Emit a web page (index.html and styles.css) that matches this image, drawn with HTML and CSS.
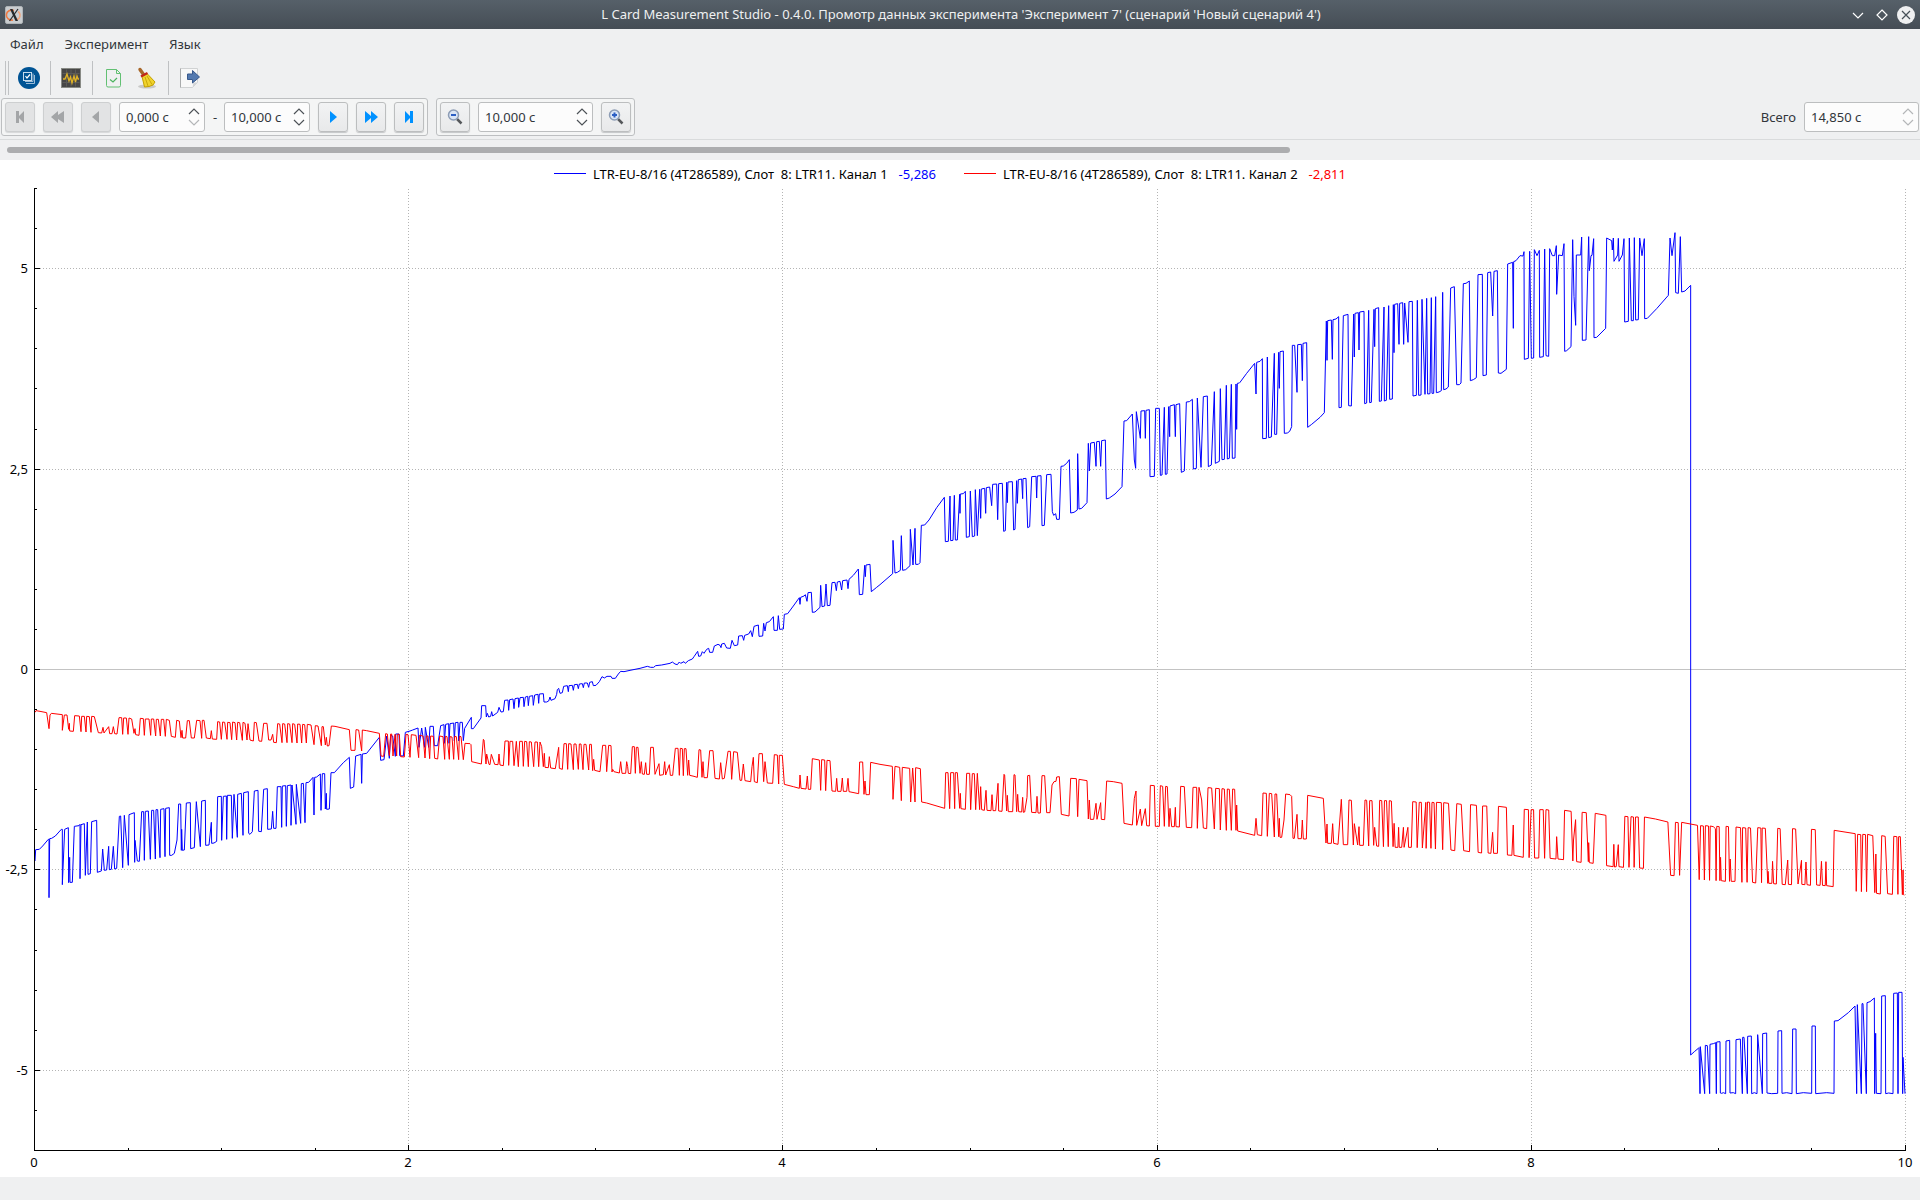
FILE: index.html
```html
<!DOCTYPE html>
<html lang="ru">
<head>
  <meta charset="UTF-8">
  <meta name="viewport" content="width=device-width, initial-scale=1.0">
  <title>L Card Measurement Studio</title>
  <link rel="stylesheet" href="styles.css">
</head>
<body>
  <header class="titlebar">
    <svg class="app-icon" width="18" height="18" viewBox="0 0 18 18">
      <rect x="0.5" y="0.5" width="17" height="17" rx="1.5" fill="#c9cdd0" stroke="#aeb3b7"/>
      <path d="M9 4.500A5.500 5 0 1 0 8 14" fill="none" stroke="#f07a43" stroke-width="1.600"/>
      <path d="M13 5.500a4.500 4.500 0 0 1-1 8" fill="none" stroke="#f0a47e" stroke-width="1.500"/>
      <path d="M5 3h2.500l5.500 12h-2.500z" fill="#25282b"/>
      <path d="M13 3L4.500 15" stroke="#25282b" stroke-width="1.200"/>
    </svg>
    <h1>L Card Measurement Studio - 0.4.0. Промотр данных эксперимента 'Эксперимент 7' (сценарий 'Новый сценарий 4')</h1>
    <div class="window-buttons">
      <button type="button" aria-label="Свернуть"><svg width="18" height="18" viewBox="0 0 18 18"><path d="M4 7l5 5 5-5" fill="none" stroke="#fff" stroke-width="1.200"/></svg></button>
      <button type="button" aria-label="Развернуть"><svg width="18" height="18" viewBox="0 0 18 18"><path d="M9 4l5 5-5 5-5-5z" fill="none" stroke="#fff" stroke-width="1.200"/></svg></button>
      <button type="button" aria-label="Закрыть"><svg width="18" height="18" viewBox="0 0 18 18"><circle cx="9" cy="9" r="9" fill="#eff0f1"/><path d="M5 5l8 8M13 5l-8 8" stroke="#475057" stroke-width="1.200"/></svg></button>
    </div>
  </header>

  <nav class="menubar">
    <button type="button">Файл</button>
    <button type="button">Эксперимент</button>
    <button type="button">Язык</button>
  </nav>

  <div class="toolbar">
    <span class="handle"></span>
    <button type="button" aria-label="Сценарий">
      <svg width="22" height="22" viewBox="0 0 22 22">
        <circle cx="11" cy="11" r="11" fill="#005495"/>
        <path d="M8 16.500h8.500V8M7 14.500h8V6.500" fill="none" stroke="#9dbdd8"/>
        <rect x="5.500" y="5.500" width="8" height="8" fill="#005495" stroke="#c6dbec"/>
        <path d="M7.500 9l1.500 2 3-3.500" fill="none" stroke="#fff" stroke-width="1.200"/>
      </svg>
    </button>
    <span class="sep"></span>
    <button type="button" aria-label="Осциллограф">
      <svg width="22" height="22" viewBox="0 0 22 22">
        <rect x="1.500" y="1.500" width="19" height="19" fill="#464646" stroke="#888a85"/>
        <path d="M2.500 6.500h17M2.500 11h17M2.500 15.500h17M6.500 2.500v17M11 2.500v17M15.500 2.500v17" stroke="#5a5a58"/>
        <path d="M3 12h2l2-5 2 7 1.500-4L12 16l2-7 1.500 6L17 9l1 3h1" fill="none" stroke="#e0b326" stroke-width="1.300"/>
      </svg>
    </button>
    <span class="sep"></span>
    <button type="button" aria-label="Проверить">
      <svg width="22" height="22" viewBox="0 0 22 22">
        <path d="M4.500 2.500h10l4 4v12a1.500 1.500 0 0 1-1.500 1.500H6a1.500 1.500 0 0 1-1.500-1.500zM14.500 2.500v4h4" fill="none" stroke="#62c073"/>
        <path d="M8 12.500l3 2.500 4-4" fill="none" stroke="#4bb35f" stroke-width="1.200"/>
      </svg>
    </button>
    <button type="button" aria-label="Очистить">
      <svg width="22" height="22" viewBox="0 0 22 22">
        <ellipse cx="11" cy="19.500" rx="9" ry="2" fill="#c9c9c8"/>
        <path d="M4 2.500l3.500 5" stroke="#a8672a" stroke-width="3.400" stroke-linecap="round"/>
        <path d="M6 9.500l5-3 8 8.500-2 3-4 1.500-4.500.500z" fill="#f0d32c" stroke="#c4a000"/>
        <path d="M9 10l3 9M11 9l5 8.500" stroke="#c9a70c"/>
        <path d="M5 9.500l6.500-3.500" stroke="#c2261a" stroke-width="2.400"/>
      </svg>
    </button>
    <span class="sep"></span>
    <button type="button" aria-label="Экспорт">
      <svg width="22" height="22" viewBox="0 0 22 22">
        <path d="M2.500 1.500h17v14l-5 5h-12z" fill="#f8f8f8" stroke="#d0d2d3"/>
        <path d="M2.500 1.500v19" stroke="#a9abac"/>
        <path d="M14.500 20.500l1-5 4 0z" fill="#d3d5d7"/>
        <path d="M9.500 7h5V3.500l7 6.500-7 6v-3.500h-5z" fill="#5379b0" stroke="#38598c"/>
      </svg>
    </button>
  </div>

  <div class="controls">
    <div class="group">
      <button class="btn" type="button" disabled aria-label="В начало"><svg width="16" height="16" viewBox="0 0 16 16"><path d="M4 2h3v5l5-5v12l-5-5v5H4z"/></svg></button>
      <button class="btn" type="button" disabled aria-label="Быстро назад"><svg width="16" height="16" viewBox="0 0 16 16"><path d="M8 2v4l6-4v12L8 10v4L1 8z"/></svg></button>
      <button class="btn" type="button" disabled aria-label="Назад"><svg width="16" height="16" viewBox="0 0 16 16"><path d="M11 2v12L4 8z"/></svg></button>
      <div class="spin">
        <input type="text" value="0,000 с" aria-label="Начало интервала">
        <span class="arrows">
          <button type="button" aria-label="Больше"><svg width="12" height="7" viewBox="0 0 12 7"><path d="M1 6l5-5 5 5"/></svg></button>
          <button type="button" disabled aria-label="Меньше"><svg width="12" height="7" viewBox="0 0 12 7"><path d="M1 1l5 5 5-5"/></svg></button>
        </span>
      </div>
      <span class="dash">-</span>
      <div class="spin">
        <input type="text" value="10,000 с" aria-label="Конец интервала">
        <span class="arrows">
          <button type="button" aria-label="Больше"><svg width="12" height="7" viewBox="0 0 12 7"><path d="M1 6l5-5 5 5"/></svg></button>
          <button type="button" aria-label="Меньше"><svg width="12" height="7" viewBox="0 0 12 7"><path d="M1 1l5 5 5-5"/></svg></button>
        </span>
      </div>
      <button class="btn" type="button" aria-label="Вперёд"><svg width="16" height="16" viewBox="0 0 16 16"><path d="M5 2v12l7-6z"/></svg></button>
      <button class="btn" type="button" aria-label="Быстро вперёд"><svg width="16" height="16" viewBox="0 0 16 16"><path d="M2 2v12l6-5v5l7-6-7-6v5z"/></svg></button>
      <button class="btn" type="button" aria-label="В конец"><svg width="16" height="16" viewBox="0 0 16 16"><path d="M4 2v12l5-5v5h3V2H9v5z"/></svg></button>
    </div>

    <div class="group">
      <button class="btn" type="button" aria-label="Уменьшить масштаб">
        <svg width="16" height="16" viewBox="0 0 16 16"><path class="handle-line" d="M10 10l4.500 4.500"/><circle class="lens" cx="6.500" cy="6" r="5"/><path class="sign" d="M4 6h5"/></svg>
      </button>
      <div class="spin wide">
        <input type="text" value="10,000 с" aria-label="Масштаб">
        <span class="arrows">
          <button type="button" aria-label="Больше"><svg width="12" height="7" viewBox="0 0 12 7"><path d="M1 6l5-5 5 5"/></svg></button>
          <button type="button" aria-label="Меньше"><svg width="12" height="7" viewBox="0 0 12 7"><path d="M1 1l5 5 5-5"/></svg></button>
        </span>
      </div>
      <button class="btn" type="button" aria-label="Увеличить масштаб">
        <svg width="16" height="16" viewBox="0 0 16 16"><path class="handle-line" d="M10 10l4.500 4.500"/><circle class="lens" cx="6.500" cy="6" r="5"/><path class="sign" d="M4 6h5M6.500 3.500v5"/></svg>
      </button>
    </div>

    <div class="total">
      <label for="total">Всего</label>
      <div class="spin wide">
        <input type="text" id="total" value="14,850 с" readonly>
        <span class="arrows">
          <button type="button" disabled aria-label="Больше"><svg width="12" height="7" viewBox="0 0 12 7"><path d="M1 6l5-5 5 5"/></svg></button>
          <button type="button" disabled aria-label="Меньше"><svg width="12" height="7" viewBox="0 0 12 7"><path d="M1 1l5 5 5-5"/></svg></button>
        </span>
      </div>
    </div>
  </div>

  <div class="scroll"><div class="thumb"></div></div>

  <main class="plot">
    <div class="legend">
      <div class="item ch1"><span class="line"></span><span class="name">LTR-EU-8/16 (4T286589), Слот  8: LTR11. Канал 1</span><span class="value">-5,286</span></div>
      <div class="item ch2"><span class="line"></span><span class="name">LTR-EU-8/16 (4T286589), Слот  8: LTR11. Канал 2</span><span class="value">-2,811</span></div>
    </div>
    <svg id="chart" viewBox="0 188 1920 989"></svg>
  </main>

  <script src="chart.js"></script>
</body>
</html>
```
FILE: styles.css
```css
* {
  box-sizing: border-box;
}
body {
  margin: 0;
  min-height: 100vh;
  background-color: #eff0f1;
  color: #31363b;
  font-family: "Noto Sans", sans-serif;
  font-size: 13px;
  line-height: 18px;
}
button {
  padding: 0;
  border: none;
  background: none;
  color: inherit;
  font: inherit;
}
svg {
  display: block;
}

.titlebar {
  display: flex;
  align-items: center;
  height: 29px;
  padding: 0 5px;
  background: linear-gradient(#566069, #454d55);
  color: #eff0f1;
}
.app-icon {
  margin-right: 50px;
}
.titlebar h1 {
  flex: 1;
  margin: 0;
  padding-bottom: 2px;
  font-size: 13px;
  font-weight: normal;
  text-align: center;
}
.window-buttons {
  display: flex;
  gap: 6px;
}

.menubar {
  display: flex;
  gap: 21px;
  height: 32px;
  padding: 0 10px 2px;
}

.toolbar {
  display: flex;
  align-items: center;
  gap: 10px;
  height: 34px;
  padding-left: 5px;
}
.toolbar .handle {
  width: 4px;
  height: 34px;
  margin-right: -1px;
  border: solid #c0c2c4;
  border-width: 0 1px;
}
.toolbar .sep {
  width: 1px;
  height: 34px;
  margin-right: -1px;
  background-color: #bfc1c3;
}
.toolbar button + button {
  margin-left: 2px;
}

.controls {
  display: flex;
  align-items: center;
  gap: 8px;
  height: 45px;
  padding: 0 1px;
  border-bottom: 1px solid #d9dbdc;
}
.group {
  display: flex;
  align-items: center;
  gap: 8px;
  height: 38px;
  padding: 0 3px;
  border: 1px solid #bdbfc1;
  border-radius: 3px;
  background-color: #f4f5f5;
}
.btn {
  display: flex;
  align-items: center;
  justify-content: center;
  width: 30px;
  height: 30px;
  border: 1px solid #bcbebf;
  border-radius: 3px;
  background: linear-gradient(#f2f3f4, #e8e9ea);
  box-shadow: 0 1px 1px #c4c6c8;
}
.btn path {
  fill: #0091ff;
}
.btn:disabled {
  border-color: #cdcfd0;
  background: #e2e3e4;
  box-shadow: 0 1px 1px #d6d8d9;
}
.btn:disabled path {
  fill: #a3a5a7;
}
.btn .handle-line {
  fill: none;
  stroke: #55585b;
  stroke-width: 2.5;
}
.btn .lens {
  fill: #dbe6f6;
  stroke: #8d9db5;
  stroke-width: 1.5;
}
.btn .sign {
  fill: none;
  stroke: #2c5fc4;
  stroke-width: 2;
}
.spin {
  display: flex;
  align-items: center;
  width: 86px;
  height: 30px;
  padding: 0 4px 0 6px;
  border: 1px solid #bcbebf;
  border-radius: 3px;
  background-color: #fcfcfc;
}
.spin.wide {
  width: 115px;
}
.spin input {
  flex: 1;
  min-width: 0;
  padding: 0;
  border: none;
  outline: none;
  background: none;
  color: #31363b;
  font: inherit;
}
.arrows {
  display: flex;
  flex-direction: column;
  gap: 4px;
}
.arrows path {
  fill: none;
  stroke: #4d5257;
  stroke-width: 1.2;
}
.arrows button:disabled path {
  stroke: #b4b6b8;
}
.dash {
  width: 3px;
}
.total {
  display: flex;
  align-items: center;
  gap: 8px;
  margin-left: auto;
}

.scroll {
  padding: 7px;
}
.thumb {
  width: 67.3%;
  height: 6px;
  border-radius: 3px;
  background-color: #acadaf;
}

.plot {
  background-color: #fff;
  color: #000;
}
.legend {
  display: flex;
  justify-content: center;
  gap: 28px;
  height: 28px;
  padding: 4px 20px 0 0;
}
.item {
  display: flex;
  align-items: center;
  height: 19px;
}
.item .line {
  width: 32px;
  height: 1px;
  margin-right: 7px;
}
.item .name {
  margin-right: 11px;
  white-space: pre;
}
.ch1 .line {
  background-color: #00f;
}
.ch1 .value {
  color: #00f;
}
.ch2 .line {
  background-color: #f00;
}
.ch2 .value {
  color: #f00;
}

#chart {
  width: 100%;
  height: auto;
}
#chart line {
  shape-rendering: crispEdges;
}
#chart text {
  font-size: 13px;
}
#chart polyline {
  fill: none;
  stroke-width: 1;
  stroke-linejoin: bevel;
}
.axis {
  stroke: #000;
}
.zero {
  stroke: #c3c3c3;
}
.grid {
  stroke: #b4b4b4;
  stroke-dasharray: 1 2;
}
.trace1 {
  stroke: #00f;
}
.trace2 {
  stroke: #f00;
}
```
FILE: chart.js
```js
const NS = 'http://www.w3.org/2000/svg';
const chart = document.getElementById('chart');

// plot area
const LEFT = 34, TOP = 188, RIGHT = 1905, BOTTOM = 1150, ZERO = 669;
const toX = v => Math.round(LEFT + v * (RIGHT - LEFT) / 10) + 0.5;
const toY = v => Math.round(ZERO - v * 80.16) + 0.5;

// each block: origin x, origin y, horizontal divider, then the samples
const channel1 = [
  [0, 660, 3, `105,603 107,569 118,568 128,558 145,538 147,538 147,713 149,536 155,535 166,528 184,508 187,508 187,674 194,508 205,503 206,668 209,592 210,667 217,667 223,499 237,497 240,493 240,656 243,494 253,491 256,646 262,486 264,643 271,641 275,485 290,481 292,637 304,633 308,567 313,631 320,630 326,559 328,629 334,628 340,559 344,627 350,625 358,469 362,468 368,623 373,466 385,616 387,464 403,458 404,607 405,541 412,603 418,604 425,455 431,455 433,601 436,454 445,453 451,598 455,451 461,451 466,597 468,449 473,449 480,593 482,448 492,446 495,590 497,445 508,443 509,586 515,586 523,580 531,540 536,432 542,432 544,571 545,508 547,571 553,570 559,429 571,428 572,566 583,563 589,425 601,560 605,423 616,421 617,556 627,555 634,487 635,550 642,549 650,544 653,410 664,409 665,541 670,409 679,408 680,538 682,406 694,406 697,535 702,403 712,532 713,403 724,400 729,526 731,398 745,395 746,520 750,523 757,515 763,393 774,391 776,514 784,515 791,388 802,386 803,508 814,507 818,454 821,505 828,505 832,380 843,380 845,502 847,378 857,377 859,499 862,377 873,375 873,496 876,375 888,493 889,373 902,490 904,371 910,370 915,488 918,368 926,367 939,352 942,465 944,352 950,351 961,342 963,451 967,341 974,341 976,447 979,400 980,448 988,447 993,338 1003,338 1030,308 1048,292 1051,385 1061,381 1067,288 1083,283 1085,370 1087,282 1100,280 1138,232 1142,301 1152,299 1160,228 1168,295 1172,226 1178,228 1186,289 1187,222 1197,222 1199,287 1210,288 1216,217 1230,213 1238,210 1254,204 1257,262 1265,204 1274,262 1276,202 1286,262 1290,199 1300,199 1303,257 1313,257 1322,197 1332,194 1333,250 1337,193 1346,191 1347,250 1350,191 1361,189 1363,243 1366,188 1374,187 1376,243 1380,187 1387,187 1390,242 1394,205 1414,172 1414,206 1420,206`],
  [440, 560, 3, `123,474 125,437 137,437 139,471 142,460 146,471 152,469 155,455 158,468 173,457 177,442 183,456 190,455 194,421 204,420 206,451 209,419 219,417 222,446 225,416 235,414 236,442 240,413 250,412 252,440 256,411 263,409 265,437 268,409 278,407 280,436 284,405 294,403 296,430 298,402 310,401 312,426 320,426 326,423 330,411 333,421 345,416 350,403 352,389 356,385 360,400 367,398 371,379 382,377 385,395 387,377 397,376 400,391 403,374 412,373 415,386 418,372 427,371 430,383 433,369 442,369 446,382 449,367 457,365 460,377 468,376 478,365 486,350 493,354 501,349 513,349 516,355 526,355 535,342 542,334 552,335 570,331 600,325 622,319 632,322 641,322 647,317 665,315 690,310 697,306 705,312 712,314 718,306 722,310 732,305 736,310 745,302 757,297 762,290 773,274 776,289 782,288 787,275 792,280 800,268 806,265 809,277 818,277 823,258 834,253 840,256 843,263 845,252 853,250 860,264 871,265 876,241 883,257 893,255 896,228 907,227 911,241 914,226 926,222 932,212 937,230 942,199 955,195 957,229 968,228 971,190 975,213 979,188 988,185 1000,170 1002,211 1012,211 1015,167 1019,208 1030,207 1033,163 1043,161 1060,138 1078,113 1080,133 1082,112 1092,108 1096,104 1101,124 1104,98 1114,97 1117,157 1125,156 1140,142 1142,76 1146,140 1154,138 1158,72 1162,137 1170,136 1176,68 1185,67 1189,92 1192,66 1200,64 1205,90 1208,62 1221,60 1224,86 1227,58 1240,46 1255,27 1258,104 1268,103 1274,16 1276,50 1278,15 1290,13 1294,95 1310,82`],
  [880, 360, 3, `0,674 38,641 39,541 45,639 52,637 61,631 64,527 68,631 77,629 90,617 91,508 99,615 105,505 107,613 115,613 120,608 124,496 134,495 147,480 170,443 193,412 196,545 205,544 210,408 212,542 219,541 223,406 226,540 232,540 239,403 240,460 241,402 250,401 256,394 259,532 268,530 271,393 277,530 284,528 286,389 292,527 299,388 302,475 304,387 314,385 317,460 319,383 329,381 335,437 338,373 350,372 353,479 356,371 367,370 371,514 376,512 380,367 382,428 384,366 397,365 401,510 405,508 410,362 412,430 415,359 425,357 428,416 429,356 438,355 443,503 449,500 455,350 468,349 470,414 472,348 483,347 486,497 493,496 500,344 513,343 517,455 521,466 527,461 530,478 538,478 543,319 550,318 560,310 568,299 572,459 582,457 592,450 593,281 597,447 605,445 621,428 625,250 628,333 632,249 643,247 648,319 650,245 658,244 662,319 665,242 676,240 679,417 688,414 705,402 726,380 732,183 740,182 757,162 763,300 767,325 769,155 781,235 783,153 794,152 796,235 798,151 808,149 810,350 823,349 827,145 838,145 841,346 846,345 853,142 856,343 861,342 866,140 869,230 870,138 883,134 886,230 888,134 899,131 904,337 913,333 919,126 928,125 937,118 940,327 949,325 952,114 963,322 970,110 982,108 985,320 994,315 1003,95 1006,310 1018,304 1021,86 1026,299 1033,298 1039,76 1042,297 1048,295 1054,73 1057,295 1065,294 1068,72 1070,208 1072,70 1078,69`],
  [1240, 220, 3, `0,487 20,460 44,430 48,522 50,427 60,424 67,416 68,656 79,655 82,411 86,653 94,651 103,400 104,643 110,643 116,397 118,505 120,395 130,393 133,640 142,639 149,634 155,620 157,376 164,376 171,517 173,374 184,373 187,482 189,370 200,368 203,622 215,613 240,592 253,578 259,303 261,421 263,302 274,300 277,418 279,299 288,297 296,290 297,563 304,562 310,287 324,283 326,557 334,558 341,282 343,411 345,280 355,278 357,390 359,276 372,274 374,551 380,549 386,271 389,548 394,547 402,268 404,380 406,266 416,263 418,544 424,543 432,261 433,543 439,541 446,257 449,538 457,537 460,254 462,398 464,253 473,251 477,373 479,250 488,248 491,373 494,249 504,367 507,245 517,244 519,528 529,526 532,241 536,526 543,525 546,238 555,523 560,235 563,522 570,521 574,233 576,520 581,520 587,230 589,518 597,516 604,512 608,217 611,509 618,507 625,501 632,204 643,200 650,494 658,494 663,489 670,191 678,190 688,183 691,482 700,479 709,473 714,164 727,163 729,467 739,465 743,158 752,156 758,288 762,154 772,152 775,459 783,460 799,448 803,132 818,127 820,325 821,125 828,122 840,107 849,108 852,95 853,418 865,415 869,94 874,415 881,414 883,89 891,107 898,91 899,412 910,410 914,87 918,407 926,409 929,86 937,107 944,107 949,77 950,223 956,105 967,107 972,71 974,394 980,392 993,380 998,59 1002,230 1007,316 1009,105 1022,105 1025,51 1027,361 1038,360 1046,50 1048,152 1053,107 1056,106 1061,56 1062,353 1070,352 1097,325 1100,54 1115,62 1117,90 1120,54 1122,124 1133,105 1135,55 1137,124 1147,105 1152,56 1154,306 1165,304 1168,54 1174,302 1180,302 1183,53 1187,300 1195,299 1199,54 1206,107 1213,56 1214,296 1222,295 1250,266 1285,226 1290,54 1296,107 1305,38 1307,218 1315,220 1321,50 1325,216 1335,213 1352,196`],
  [1660, 960, 3, `92,285 103,275 115,265 117,263 120,401 121,260 134,401 136,256 142,257 149,401 150,253 160,251 167,248 169,401 170,246 180,245 181,399 185,400 190,398 197,401 198,243 209,241 210,399 220,398 227,401 228,239 241,237 247,401 248,232 252,232 262,401 263,229 274,228 275,401 283,398 291,401 293,224 307,401 308,221 320,219 321,399 335,401 353,400 354,213 365,212 366,400 380,398 396,401 398,207 408,207 409,401 430,398 455,400 456,198 466,198 467,401 500,398 522,400 523,183 534,182 565,158 585,138 590,401 592,134 604,401 606,131 609,131 619,401 621,128 630,125 643,114 644,401 647,220 649,400 663,401 665,108 676,107 677,401 686,399 699,401 701,100 712,99 714,401 716,97 726,97 728,401 729,292 735,401`]
];

const channel2 = [
  [0, 660, 3, `105,157 108,152 120,154 140,158 147,206 150,165 154,160 187,164 187,211 193,165 201,165 206,208 208,190 209,213 220,214 224,167 238,168 243,215 245,169 253,169 258,216 260,169 268,170 273,217 275,169 283,170 295,218 305,219 309,202 312,219 326,200 329,221 336,221 340,200 344,221 351,222 357,173 365,173 368,223 371,174 379,174 384,223 387,174 395,177 402,220 405,206 407,224 417,226 421,175 430,176 433,226 436,177 447,177 452,226 454,177 461,177 467,228 469,178 475,178 481,228 484,178 491,178 496,229 499,178 508,181 514,229 526,232 530,181 538,183 543,233 546,211 548,234 557,234 562,182 568,182 574,234 583,234 590,181 600,182 605,235 607,181 612,181 619,234 631,236 634,212 637,237 650,238 653,185 659,186 664,238 668,186 674,187 681,238 683,187 690,188 695,239 698,186 705,188 710,240 713,187 719,188 727,241 729,187 735,190 741,240 744,191 750,240 760,243 763,187 769,188 777,243 785,244 791,190 801,190 806,240 813,240 818,223 821,247 829,248 833,191 839,192 846,248 848,191 854,192 861,248 863,191 869,192 876,248 878,191 884,193 891,249 893,192 900,193 905,249 908,193 914,194 919,249 922,193 933,195 942,254 946,197 954,198 964,257 966,200 970,200 976,255 979,232 982,258 987,257 994,198 1005,199 1048,209 1053,271 1065,271 1068,209 1076,210 1085,273 1087,210 1100,212 1138,220 1143,288 1151,289 1157,221 1162,222 1168,287 1172,222 1175,222 1179,288 1185,223 1190,288 1192,223 1198,223 1202,290 1213,291 1218,223 1224,224 1230,292 1234,224 1248,226 1256,293 1258,226 1269,228 1275,294 1279,228 1284,228 1289,296 1292,228 1300,229 1304,295 1313,297 1319,228 1329,230 1334,298 1336,229 1341,230 1348,298 1350,230 1356,231 1361,298 1364,229 1369,230 1376,299 1378,229 1383,230 1390,299 1395,250 1410,251 1413,254 1415,305`],
  [440, 560, 3, `120,611 124,612 130,538 132,540 138,612 140,582 147,613 150,614 154,583 164,613 174,614 177,582 180,615 190,617 195,543 205,543 206,616 210,544 218,544 222,617 229,544 235,620 239,544 247,544 250,619 254,544 260,545 265,620 268,545 274,546 281,620 285,546 292,546 296,620 300,546 305,560 310,620 313,580 315,622 325,623 328,590 332,624 346,626 356,562 358,625 367,628 372,551 379,551 383,628 386,551 393,552 400,629 402,552 408,552 415,628 418,552 423,552 429,629 432,553 438,553 446,630 449,553 454,553 458,632 461,598 464,631 480,635 488,556 497,556 500,635 506,556 513,557 516,636 518,628 522,635 538,639 542,605 546,640 557,640 560,605 563,620 565,640 572,641 577,560 583,560 586,640 589,562 594,562 600,640 604,605 607,642 613,643 617,608 620,643 628,643 632,562 640,562 645,643 657,611 659,646 670,644 674,605 677,645 688,614 691,646 698,646 706,565 714,565 718,646 721,565 727,566 730,647 733,566 738,566 743,646 746,600 749,646 762,649 772,652 777,569 782,570 786,652 789,605 792,653 802,653 809,572 819,572 825,655 838,657 842,608 847,657 853,655 864,574 871,574 875,658 881,575 892,577 900,661 905,661 910,612 915,662 932,665 936,620 940,592 943,665 952,668 957,581 967,581 971,665 975,605 982,669 998,670 1003,584 1012,585 1016,672 1018,586 1027,586 1033,673 1060,680 1078,685 1080,645 1083,685 1098,687 1102,648 1105,688 1112,688 1117,596 1138,600 1142,691 1145,599 1154,600 1157,692 1161,601 1170,602 1176,693 1187,694 1190,655 1193,694 1203,694 1207,654 1210,694 1220,694 1224,655 1227,695 1256,701 1259,606 1268,606 1272,703 1275,663 1278,704 1288,704 1292,607`],
  [880, 720, 3, `0,133 37,139 39,238 45,139 59,142 64,242 67,142 89,145 92,246 98,144 105,246 107,143 121,146 125,246 140,249 194,265 197,158 204,158 209,266 212,158 221,158 224,266 226,158 232,158 239,265 241,220 243,266 256,268 260,160 269,160 272,269 277,161 283,161 287,269 292,160 299,269 302,200 305,269 313,271 318,211 321,271 333,272 336,224 339,272 347,272 354,190 356,273 366,274 372,163 374,165 380,273 382,226 385,275 398,275 402,164 405,165 410,275 413,223 416,275 425,276 428,232 430,277 434,276 441,232 443,167 449,166 455,277 468,278 471,229 474,279 481,279 486,167 494,167 500,278 510,278 516,195 522,185 528,184 530,171 538,170 544,283 567,288 572,175 589,176 593,290 597,178 621,182 625,297 628,240 631,298 641,298 648,250 651,298 662,248 664,298 674,299 680,183 700,185 726,190 732,310 757,315 763,235 768,213 770,316 781,267 785,317 796,266 800,317 808,318 811,196 823,197 826,319 838,319 841,197 848,199 853,319 857,199 862,200 867,320 870,265 875,320 883,320 886,262 888,320 898,321 902,199 913,200 919,322 935,323 939,202 950,202 952,325 957,202 965,240 970,324 980,326 984,203 995,204 1003,327 1007,205 1018,206 1021,330 1026,206 1033,207 1039,331 1042,207 1048,208 1054,331 1058,207 1064,208 1068,331 1070,255 1073,333 1124,346 1128,295 1132,344 1145,347 1149,219 1159,220 1162,349 1168,220 1175,221 1183,351 1185,222 1190,222 1196,350 1198,295 1200,352 1205,352 1212,300 1217,222 1230,224 1235,229 1239,355 1243,355 1251,283 1254,356 1264,356 1267,300 1270,357 1279,357 1283,226 1330,235 1338,369 1341,312 1343,370 1354,370 1358,311 1361,370 1374,373 1384,238 1390,374 1403,374 1407,240 1414,241 1420,375 1423,311 1433,375 1437,320 1439,376 1450,376 1455,240 1460,241 1466,378 1469,242 1476,242 1481,376 1484,322 1490,378 1496,379 1499,241`],
  [1380, 760, 2.904, `5,122 10,260 13,122 19,122 24,260 27,122 33,123 38,260 41,190 44,262 52,262 54,202 56,262 63,262 68,202 70,262 81,202 83,262 91,262 95,125 105,126 108,263 114,127 120,127 123,264 133,127 134,265 138,126 144,127 148,265 151,127 157,128 161,267 164,127 178,128 182,269 185,128 199,130 206,270 217,272 223,131 236,133 243,272 260,275 263,134 280,136 285,277 295,279 298,138 310,138 314,279 322,280 327,217 330,280 341,280 344,139 367,142 370,285 383,286 387,195 389,286 416,292 419,148 431,149 433,293 439,149 446,149 449,294 461,294 464,149 474,149 478,295 482,149 490,150 494,295 511,297 513,230 517,297 533,299 536,151 555,154 560,303 562,240 568,179 571,305 584,307 587,157 599,158 605,305 606,248 608,308 619,310 625,160 656,166 658,317 677,320 679,253 681,321 686,320 692,254 694,320 707,322 711,169 720,170 723,322 729,170 736,171 738,322 742,171 750,171 754,324 765,325 768,171 800,177 836,186 844,346 854,347 858,187 866,188 870,346 876,187 922,196 927,359 931,197 939,198 942,360 945,197 954,198 957,361 959,198 968,200 974,206 976,362 978,199 985,200 987,362 989,292 991,362 1003,364 1005,199 1012,200 1015,364 1017,297 1020,364 1031,364 1034,201 1047,203 1051,367 1053,203 1062,204 1066,367 1069,203 1076,204 1082,367 1091,369 1097,203 1106,204 1108,368 1110,204 1119,205 1126,370 1127,334 1129,370 1138,370 1140,304 1143,371 1151,372 1155,205 1162,206 1168,373 1177,374 1184,300 1186,373 1195,374 1198,206 1207,207 1214,372 1224,301 1225,373 1234,374 1237,306 1240,374 1250,376 1253,208 1264,209 1268,375 1278,376 1282,304 1285,376 1293,377 1295,305 1297,377 1316,380 1319,211 1380,221 1383,394 1387,223 1396,224 1398,395 1402,223 1410,224 1413,395 1416,223 1431,227 1437,398 1440,282 1442,400 1453,402 1457,227 1467,229 1474,401 1488,403 1492,229 1501,230 1504,403 1506,230 1511,230 1517,404 1519,330 1520,404 1523,405`]
];

function add(tag, attrs, text) {
  const el = document.createElementNS(NS, tag);
  for (const key in attrs) el.setAttribute(key, attrs[key]);
  if (text) el.textContent = text;
  chart.appendChild(el);
}

function line(cls, x1, y1, x2, y2) {
  add('line', { class: cls, x1, y1, x2, y2 });
}

function trace(cls, blocks) {
  const points = blocks.map(([x0, y0, k, data]) =>
    data.split(' ').map(pair => {
      const [x, y] = pair.split(',');
      return (x0 + x / k).toFixed(2) + ',' + (y0 + y / 3).toFixed(2);
    }).join(' ')
  ).join(' ');
  add('polyline', { class: cls, points });
}

// grid
for (let v = 2; v <= 10; v += 2) line('grid', toX(v), BOTTOM, toX(v), TOP);
for (const v of [5, 2.5, -2.5, -5]) line('grid', LEFT, toY(v), RIGHT, toY(v));
line('zero', LEFT, toY(0), RIGHT, toY(0));

trace('trace1', channel1);
trace('trace2', channel2);

// axes
line('axis', LEFT + 0.5, TOP, LEFT + 0.5, BOTTOM + 1);
line('axis', LEFT, BOTTOM + 0.5, RIGHT + 1, BOTTOM + 0.5);
for (let v = 0; v <= 10; v += 0.5) {
  line('axis', toX(v), BOTTOM, toX(v), BOTTOM - (v % 2 ? 2 : 5));
}
for (let v = -5.5; v <= 6; v += 0.5) {
  line('axis', LEFT, toY(v), LEFT + (v % 2.5 ? 3 : 6), toY(v));
}
for (let v = 0; v <= 10; v += 2) {
  add('text', { x: toX(v) - 0.5, y: 1167, 'text-anchor': 'middle' }, String(v));
}
for (const v of [5, 2.5, 0, -2.5, -5]) {
  add('text', { x: 28, y: toY(v) + 4.5, 'text-anchor': 'end' }, String(v).replace('.', ','));
}
```
